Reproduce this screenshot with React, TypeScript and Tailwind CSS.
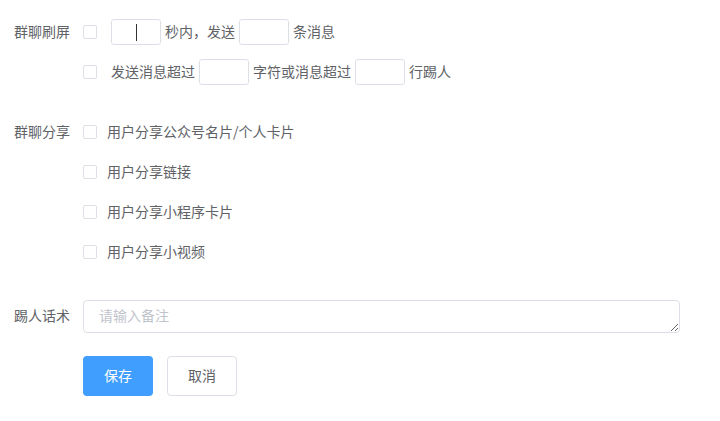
import React from "react";

const Checkbox = () => (
  <span className="inline-block w-[14px] h-[14px] border border-[#dcdfe6] rounded-[2px] bg-white shrink-0" />
);

const SmallInput = ({ caret }: { caret?: boolean }) => (
  <span className="relative inline-block w-[50px] h-[26px] border border-[#dcdfe6] rounded-[3px] bg-white shrink-0">
    {caret && <span className="absolute left-[24px] top-[4px] w-px h-[17px] bg-[#333]" />}
  </span>
);

const T = ({ children, className = "" }: { children?: React.ReactNode; className?: string }) => (
  <span className={"leading-none pb-[3px] " + className}>{children}</span>
);

export default function App() {
  return (
    <div
      className="w-[720px] h-[421px] bg-white text-[14px] text-[#606266] flex flex-col"
      style={{ fontFamily: '"Noto Sans CJK SC", "Noto Sans", sans-serif' }}
    >
      <div className="pt-[12px]">
        <div className="flex items-center h-[40px]">
          <div className="w-[83px] pl-[14px] flex"><T>群聊刷屏</T></div>
          <Checkbox />
          <div className="flex items-center ml-[14px] gap-[4px]">
            <SmallInput caret />
            <T>秒内，发送</T>
            <SmallInput />
            <T>条消息</T>
          </div>
        </div>
        <div className="flex items-center h-[40px]">
          <div className="w-[83px]" />
          <Checkbox />
          <div className="flex items-center ml-[14px] gap-[4px]">
            <T>发送消息超过</T>
            <SmallInput />
            <T>字符或消息超过</T>
            <SmallInput />
            <T>行踢人</T>
          </div>
        </div>
      </div>

      <div className="mt-[20px]">
        {["用户分享公众号名片/个人卡片", "用户分享链接", "用户分享小程序卡片", "用户分享小视频"].map((t, i) => (
          <div key={t} className="flex items-center h-[40px]">
            <div className="w-[83px] pl-[14px] flex"><T>{i === 0 ? "群聊分享" : ""}</T></div>
            <Checkbox />
            <T className="ml-[10px]">{t}</T>
          </div>
        ))}
      </div>

      <div className="flex items-center mt-[28px]">
        <div className="w-[83px] pl-[14px] flex"><T>踢人话术</T></div>
        <textarea
          placeholder="请输入备注"
          className="w-[597px] h-[33px] border border-[#dcdfe6] rounded-[4px] px-[15px] py-[4px] text-[14px] leading-[21px] text-[#606266] placeholder:text-[#c0c4cc] outline-none block"
          style={{ fontFamily: '"Noto Sans CJK SC", "Noto Sans", sans-serif' }}
        />
      </div>

      <div className="flex items-center mt-[23px] pl-[83px] gap-[14px]">
        <button className="w-[70px] h-[40px] rounded-[4px] bg-[#409eff] text-white text-[14px] leading-none pb-[2px]">
          保存
        </button>
        <button className="w-[70px] h-[40px] rounded-[4px] bg-white border border-[#dcdfe6] text-[#606266] text-[14px] leading-none pb-[2px]">
          取消
        </button>
      </div>
    </div>
  );
}
